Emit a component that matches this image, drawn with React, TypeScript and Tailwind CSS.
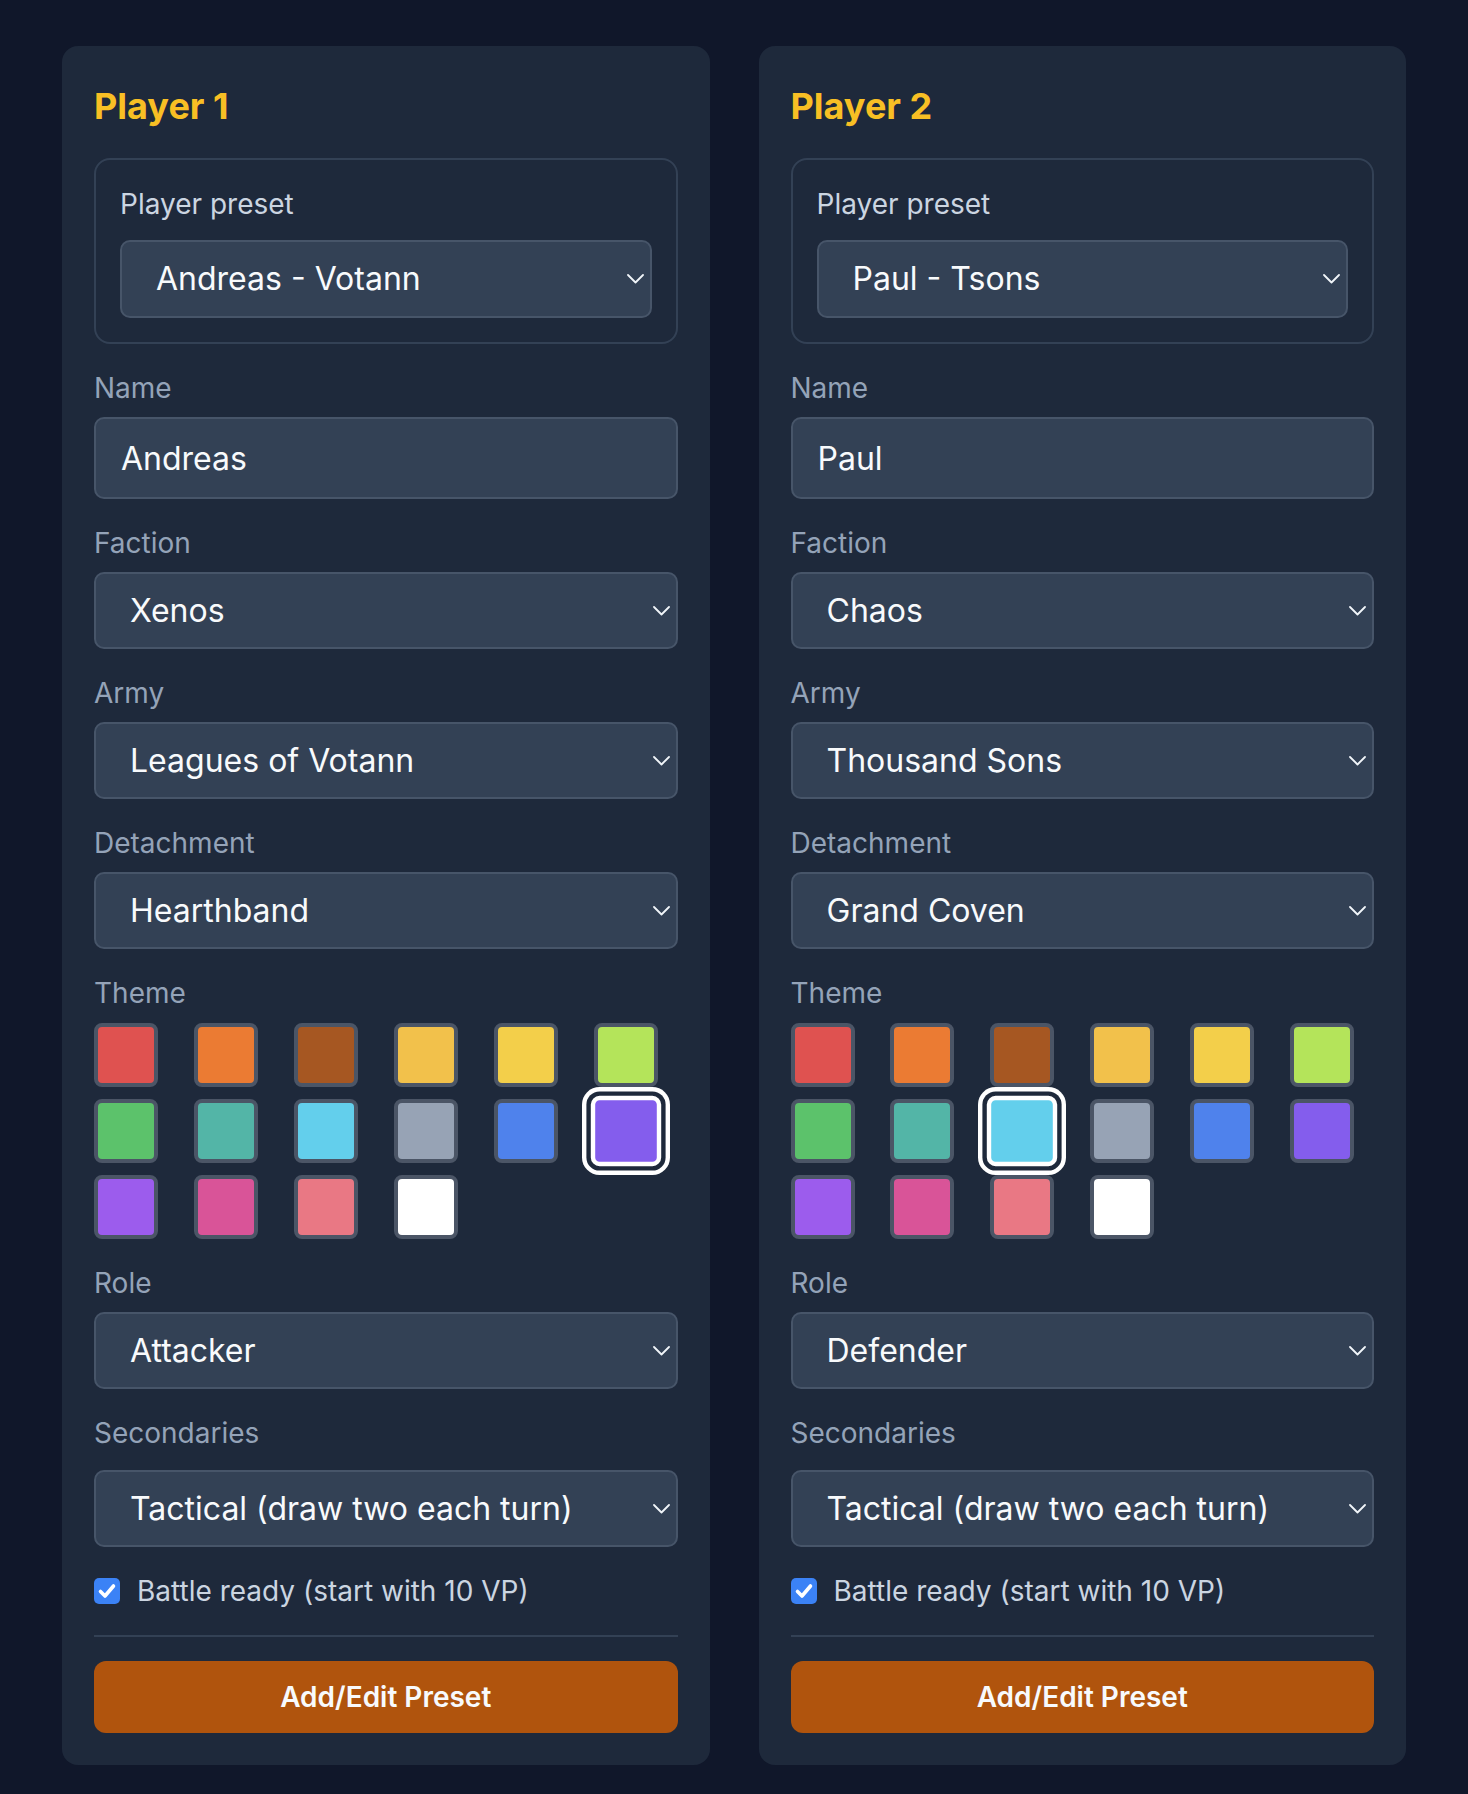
import { useState } from "react";

type Player = {
  title: string;
  preset: string;
  presets: string[];
  name: string;
  faction: string;
  army: string;
  detachment: string;
  theme: number;
  role: string;
};

const SWATCHES = [
  "#df5250",
  "#eb7b33",
  "#a65722",
  "#f2c14b",
  "#f3cf4a",
  "#b4e45a",
  "#5cc26b",
  "#53b5a7",
  "#63cfec",
  "#97a3b5",
  "#4f82ec",
  "#845ded",
  "#9c5ced",
  "#d95498",
  "#e97884",
  "#ffffff",
];

const PLAYERS: Player[] = [
  {
    title: "Player 1",
    preset: "Andreas - Votann",
    presets: ["Andreas - Votann", "Paul - Tsons"],
    name: "Andreas",
    faction: "Xenos",
    army: "Leagues of Votann",
    detachment: "Hearthband",
    theme: 11,
    role: "Attacker",
  },
  {
    title: "Player 2",
    preset: "Paul - Tsons",
    presets: ["Andreas - Votann", "Paul - Tsons"],
    name: "Paul",
    faction: "Chaos",
    army: "Thousand Sons",
    detachment: "Grand Coven",
    theme: 8,
    role: "Defender",
  },
];

function Chevron() {
  return (
    <svg
      className="pointer-events-none absolute right-[8px] top-1/2 h-[10px] w-[17px] -translate-y-1/2"
      viewBox="0 0 17 10"
      fill="none"
      stroke="#f1f5f9"
      strokeWidth="1.8"
      strokeLinecap="round"
      strokeLinejoin="round"
    >
      <polyline points="1,1 8.5,8.5 16,1" />
    </svg>
  );
}

function Select({ value, options, tall }: { value: string; options: string[]; tall?: boolean }) {
  return (
    <div className="relative">
      <select
        defaultValue={value}
        className={
          (tall ? "h-[78px] " : "h-[77px] ") +
          "w-full appearance-none rounded-[10px] border-2 border-[#475569] bg-[#334155] pl-[34px] pr-[40px] text-[32px] text-[#f8fafc] outline-none"
        }
      >
        {options.map((o) => (
          <option key={o}>{o}</option>
        ))}
      </select>
      <Chevron />
    </div>
  );
}

function Field({
  label,
  children,
  gap = "mt-[9px]",
}: {
  label: string;
  children: React.ReactNode;
  gap?: string;
}) {
  return (
    <div>
      <label className="block text-[28px] leading-[40px] text-[#94a3b8]">{label}</label>
      <div className={gap}>{children}</div>
    </div>
  );
}

function PlayerCard({ player }: { player: Player }) {
  const [theme, setTheme] = useState(player.theme);
  const [ready, setReady] = useState(true);

  return (
    <section className="rounded-[16px] bg-[#1e293b] p-[32px]">
      <h2 className="text-[36px] font-bold leading-[56px] text-[#f8bf24]">{player.title}</h2>

      <div className="mt-[24px] rounded-[16px] border-2 border-[#334155] p-[24px]">
        <label className="block text-[28px] leading-[40px] text-[#cbd5e1]">Player preset</label>
        <div className="mt-[16px]">
          <Select value={player.preset} options={player.presets} tall />
        </div>
      </div>

      <div className="mt-[24px] flex flex-col gap-[24px]">
        <Field label="Name">
          <input
            defaultValue={player.name}
            className="h-[82px] w-full rounded-[10px] border-2 border-[#475569] bg-[#334155] px-[25px] text-[32px] text-[#f8fafc] outline-none"
          />
        </Field>
        <Field label="Faction">
          <Select value={player.faction} options={["Xenos", "Chaos", "Imperium"]} />
        </Field>
        <Field label="Army">
          <Select value={player.army} options={["Leagues of Votann", "Thousand Sons"]} />
        </Field>
        <Field label="Detachment">
          <Select value={player.detachment} options={["Hearthband", "Grand Coven"]} />
        </Field>
        <Field label="Theme" gap="mt-[10px]">
          <div className="grid grid-cols-6 gap-x-[16px] gap-y-[12px]">
            {SWATCHES.map((c, i) => (
              <button
                key={c}
                type="button"
                onClick={() => setTheme(i)}
                style={{ backgroundColor: c }}
                className={
                  i === theme
                    ? "h-[64px] w-[64px] scale-110 rounded-[8px] border-[4px] border-white ring-4 ring-white ring-offset-4 ring-offset-[#1e293b]"
                    : "h-[64px] w-[64px] rounded-[8px] border-[4px] border-[#4b5566]"
                }
              />
            ))}
          </div>
        </Field>
        <Field label="Role">
          <Select value={player.role} options={["Attacker", "Defender"]} />
        </Field>
        <Field label="Secondaries" gap="mt-[17px]">
          <Select
            value="Tactical (draw two each turn)"
            options={["Tactical (draw two each turn)", "Fixed"]}
          />
        </Field>
      </div>

      <label className="mt-[24px] flex h-[40px] cursor-pointer items-center gap-[17px]">
        <span
          onClick={() => setReady(!ready)}
          className={
            ready
              ? "flex h-[26px] w-[26px] items-center justify-center rounded-[5px] bg-[#3b82f6]"
              : "flex h-[26px] w-[26px] items-center justify-center rounded-[5px] border-2 border-[#64748b] bg-white"
          }
        >
          {ready && (
            <svg viewBox="0 0 26 26" className="h-[26px] w-[26px]" fill="none">
              <path
                d="M6.5 13.5l4.5 4.5 8.5-10"
                stroke="white"
                strokeWidth="3.6"
                strokeLinecap="round"
                strokeLinejoin="round"
              />
            </svg>
          )}
        </span>
        <span className="text-[28px] leading-[40px] text-[#cbd5e1]">Battle ready (start with 10 VP)</span>
      </label>

      <div className="mt-[24px] border-t-2 border-[#334155] pt-[24px]">
        <button
          type="button"
          className="h-[72px] w-full rounded-[12px] bg-[#b0540d] text-[28px] font-semibold text-[#f8fafc]"
        >
          Add/Edit Preset
        </button>
      </div>
    </section>
  );
}

export default function App() {
  return (
    <div className="min-h-screen bg-[#10172a] px-[62px] pb-[31px] pt-[46px] font-['Inter','Noto_Sans',sans-serif]">
      <div className="grid grid-cols-2 items-start gap-[49px]">
        {PLAYERS.map((p) => (
          <PlayerCard key={p.title} player={p} />
        ))}
      </div>
    </div>
  );
}
